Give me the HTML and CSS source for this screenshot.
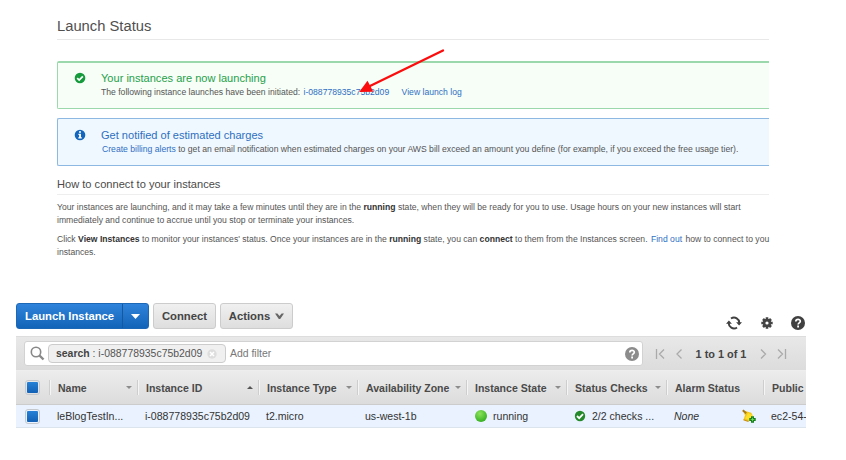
FILE: index.html
```html
<!DOCTYPE html>
<html lang="en">
<head>
<meta charset="utf-8">
<title>Launch Status</title>
<link rel="stylesheet" href="styles.css">
</head>
<body>
<main class="status">
  <h1>Launch Status</h1>
  <section class="notice success">
    <svg class="nicon" viewBox="0 0 12 12"><circle cx="6" cy="6" r="5.300" fill="#159a3c"/><path d="M3.200 6.100l2 2 3.600-3.800" fill="none" stroke="#fff" stroke-width="1.700"/></svg>
    <div>
      <h2>Your instances are now launching</h2>
      <p class="small launch">The following instance launches have been initiated: <a class="id">i-088778935c75b2d09</a> <a class="log">View launch log</a></p>
    </div>
  </section>
  <section class="notice info">
    <svg class="nicon" viewBox="0 0 12 12"><circle cx="6" cy="6" r="5.300" fill="#1266bd"/><path d="M5 2.200h2v1.600H5zM4.400 4.800H7v3.500h.8v1.200H4.300V8.300h.8V6h-.7z" fill="#fff"/></svg>
    <div>
      <h2>Get notified of estimated charges</h2>
      <p class="small bill"><a>Create billing alerts</a> to get an email notification when estimated charges on your AWS bill exceed an amount you define (for example, if you exceed the free usage tier).</p>
    </div>
  </section>
  <h3>How to connect to your instances</h3>
  <p class="small para">Your instances are launching, and it may take a few minutes until they are in the <b>running</b> state, when they will be ready for you to use. Usage hours on your new instances will start<br>immediately and continue to accrue until you stop or terminate your instances.</p>
  <p class="small para">Click <b>View Instances</b> to monitor your instances' status. Once your instances are in the <b>running</b> state, you can <b>connect</b> to them from the Instances screen. <a class="find">Find out</a> how to connect to you<br>instances.</p>
  <svg class="arrow" viewBox="0 0 90 50"><path d="M85 3.500L11 39.500" stroke="#fb0d0d" stroke-width="2.300" stroke-linecap="round"/><path d="M1.200 44.900L9.500 33.800 15.300 44.700z" fill="#fb0d0d"/></svg>
</main>
<section class="console">
  <div class="toolbar">
    <div class="btn primary"><span class="launchlabel">Launch Instance</span><span class="split"><svg width="9" height="5" viewBox="0 0 9 5"><path d="M0 0h9L4.500 5z" fill="#fff"/></svg></span></div>
    <div class="btn connect">Connect</div>
    <div class="btn actions">Actions<svg width="9" height="7" viewBox="0 0 9 7"><path d="M0 .5h2.400L4.500 3 6.600.5H9L5.200 6H3.800z" fill="#666"/></svg></div>
    <div class="tools">
      <svg class="refresh" viewBox="0 0 16 14"><path d="M5 2.600A5.200 5.200 0 0 1 13.200 7.500M11 11.400A5.200 5.200 0 0 1 2.800 6.500" fill="none" stroke="#404040" stroke-width="1.900"/><path d="M0 7.800L2.900 4.500 5.900 7.800zM10.100 6.200h5.900L13.100 9.500z" fill="#404040"/></svg>
      <svg class="gear" viewBox="-6 -6 12 12"><g stroke="#444" stroke-width="2.600"><path d="M0-5.700V5.700M-5.700 0H5.700M-4-4L4 4M4-4L-4 4"/></g><circle r="4.200" fill="#444"/><circle r="1.600" fill="#fff"/></svg>
      <svg class="help" viewBox="0 0 14 14"><circle cx="7" cy="7" r="7" fill="#404040"/><path d="M4.800 5.400C4.800 2.600 9.400 2.700 9.300 5.300 9.200 6.900 7.100 6.900 7.100 8.600" fill="none" stroke="#fff" stroke-width="1.700"/><path d="M6.200 9.600h1.800v1.800H6.200z" fill="#fff"/></svg>
    </div>
  </div>
  <div class="filterbar">
    <div class="search">
      <svg class="mag" viewBox="0 0 15 15"><circle cx="6" cy="6" r="4.700" fill="none" stroke="#888" stroke-width="1.600"/><path d="M9.500 9.500l4 4" stroke="#888" stroke-width="2.400"/></svg>
      <div class="chip"><span><b>search</b> : i-088778935c75b2d09</span><svg width="10" height="10" viewBox="0 0 10 10"><circle cx="5" cy="5" r="4.700" fill="#ddd"/><path d="M3 3l4 4M7 3L3 7" stroke="#fff" stroke-width="1.500"/></svg></div>
      <span class="add">Add filter</span>
      <svg class="shelp" viewBox="0 0 14 14"><circle cx="7" cy="7" r="7" fill="#8c8c8c"/><path d="M4.800 5.400C4.800 2.600 9.400 2.700 9.300 5.300 9.200 6.900 7.100 6.900 7.100 8.600" fill="none" stroke="#fff" stroke-width="1.700"/><path d="M6.200 9.600h1.800v1.800H6.200z" fill="#fff"/></svg>
    </div>
    <div class="pager">
      <svg width="28" height="12" viewBox="0 0 28 12" fill="none" stroke="#aaa" stroke-width="1.300"><path d="M1.500 1v10M9 1.500L4.500 6 9 10.500M26.500 1.500L22 6l4.500 4.500"/></svg>
      <b>1 to 1 of 1</b>
      <svg width="28" height="12" viewBox="0 0 28 12" fill="none" stroke="#aaa" stroke-width="1.300"><path d="M2 1.500L6.500 6 2 10.500M19 1.500L23.500 6 19 10.500M26.500 1v10"/></svg>
    </div>
  </div>
  <div class="row head">
    <div class="cell sel"><i class="check"></i></div>
    <div class="cell">Name<i class="sort"></i></div>
    <div class="cell">Instance ID<i class="sort up"></i></div>
    <div class="cell">Instance Type<i class="sort"></i></div>
    <div class="cell">Availability Zone<i class="sort"></i></div>
    <div class="cell">Instance State<i class="sort"></i></div>
    <div class="cell">Status Checks<i class="sort"></i></div>
    <div class="cell">Alarm Status</div>
    <div class="cell">Public</div>
  </div>
  <div class="row data">
    <div class="cell sel"><i class="check"></i></div>
    <div class="cell">leBlogTestIn...</div>
    <div class="cell">i-088778935c75b2d09</div>
    <div class="cell">t2.micro</div>
    <div class="cell">us-west-1b</div>
    <div class="cell"><i class="dot"></i>running</div>
    <div class="cell"><svg class="ok" viewBox="0 0 12 12"><circle cx="6" cy="6" r="5.200" fill="#24892a"/><path d="M3 6l2.200 2.200L9 4.200" fill="none" stroke="#fff" stroke-width="1.800"/></svg>2/2 checks ...</div>
    <div class="cell"><em>None</em><svg class="bell" viewBox="0 0 14 14"><path d="M.8 1.200L4 2.300 9.200 3.800 10.500 6 6.500 12.500 1.500 10.800 3 6.200z" fill="#f3c719"/><path d="M.8 1.200l3.400 3" stroke="#a97818" stroke-width="2"/><path d="M1.500 10.800l5 1.700" stroke="#c98f14" stroke-width="1.200"/><path d="M6 4l5 2.200-3 5-5-1.600z" fill="#ffdf28"/><path d="M10.500 7.300v6.400M7.300 10.500h6.400" stroke="#16811c" stroke-width="3"/><path d="M10.500 8.700v3.600M8.700 10.500h3.600" stroke="#7ae364" stroke-width=".8"/></svg></div>
    <div class="cell">ec2-54-</div>
  </div>
</section>
</body>
</html>
```
FILE: styles.css
```css
* { box-sizing: border-box; }
body { margin: 0; width: 846px; height: 460px; overflow: hidden; background: #fff; font-family: "Liberation Sans", Arial, sans-serif; color: #4a4a4a; }
h1, h2, h3, p { margin: 0; font-weight: normal; white-space: nowrap; }
a { color: #2f6fc4; }
svg { display: block; flex: none; }
.status { position: relative; width: 712px; height: 303px; margin-left: 57px; padding-top: 12px; }
h1 { height: 28px; line-height: 28px; font-size: 14.750px; border-bottom: 1px solid #e8e8e8; color: #505050; }
.notice { display: flex; height: 48px; padding: 10px 0 0 16px; border: 1px solid; border-right: 0; border-radius: 2px 0 0 2px; }
.nicon { width: 12px; height: 12px; margin-right: 15px; }
.success { margin-top: 21px; padding-top: 9px; border-top-width: 2px; border-color: #9bd8ab; background: #f7fef7; }
.info { margin-top: 9px; border-color: #8db8e2; background: #eff8ff; }
h2 { height: 13px; line-height: 13px; font-size: 11.050px; color: #25a04b; }
.info h2 { color: #2e6fc0; }
.small { font-size: 8.620px; line-height: 13px; color: #555; }
.small b { color: #333; }
.notice .small { margin-top: 1px; }
.id { margin-left: 1px; }
.log { margin-left: 10px; }
.find { margin: 0 1px; }
.bill { padding-left: 1px; font-size: 8.640px; }
h3 { height: 21px; margin-top: 8px; line-height: 20px; font-size: 11.100px; border-bottom: 1px solid #eee; }
.para { margin-top: 6px; }
.arrow { position: absolute; left: 301px; top: 47px; width: 90px; height: 50px; }
.console { width: 790px; margin-left: 16px; font-size: 10.550px; overflow: hidden; color: #333; }
.toolbar { display: flex; height: 33px; }
.btn { display: flex; align-items: center; justify-content: center; height: 26px; border: 1px solid #ccc; border-radius: 3px; background: linear-gradient(#f0f0f0, #dedede); color: #444; font-size: 11.300px; font-weight: bold; white-space: nowrap; }
.primary { width: 133px; border-color: #1c68b7; background: linear-gradient(#2f83da, #1264b8); color: #fff; }
.launchlabel { width: 106px; text-align: center; }
.split { display: flex; width: 26px; height: 24px; align-items: center; justify-content: center; border-left: 1px solid #1458a0; }
.connect { width: 63px; margin-left: 4px; }
.actions { width: 73px; margin-left: 4px; gap: 5px; }
.tools { display: flex; align-items: center; margin: 7px 1px 0 auto; }
.refresh { width: 16px; height: 14px; }
.gear { width: 12px; height: 12px; margin-left: 19px; }
.help { width: 14px; height: 14px; margin-left: 18px; }
.filterbar { display: flex; align-items: center; height: 34px; border-top: 1px solid #ddd; background: linear-gradient(#e8e8e8, #dcdcdc); }
.search { display: flex; align-items: center; width: 619px; height: 25px; margin-left: 8px; padding: 0 3px 0 5px; border: 1px solid #d2d2d2; border-radius: 3px; background: #fff; }
.mag { width: 15px; height: 15px; }
.chip { display: flex; align-items: center; justify-content: space-between; width: 178px; height: 19px; margin-left: 3px; padding: 0 8px 0 7px; border: 1px solid #ccc; border-radius: 4px; background: #f0f0f0; color: #555; font-size: 10.450px; white-space: nowrap; }
.chip b { color: #444; }
.add { margin-left: 4px; color: #777; font-size: 10.450px; }
.shelp { width: 14px; height: 14px; margin-left: auto; }
.pager { display: flex; align-items: center; justify-content: space-between; width: 132px; margin-left: 12px; color: #444; font-size: 10.900px; }
.row { display: grid; grid-template-columns: 33px 88px 121px 99px 109px 100px 100px 97px 43px; }
.cell { display: flex; align-items: center; height: 15px; padding-left: 8px; white-space: nowrap; }
.cell.sel { padding-left: 9px; }
.head { height: 35px; align-items: center; border-top: 1px solid #eee; border-bottom: 1px solid #ccc; background: linear-gradient(#ececec, #dcdcdc); color: #4a4a4a; font-weight: bold; }
.head .cell:not(.sel) { border-left: 1px solid #cecece; box-shadow: inset 1px 0 #f5f5f5; }
.data { height: 23px; align-items: center; border-bottom: 1px solid #dbe3ed; background: #e9f2fe; color: #333; }
.sort { margin: 0 5px 0 auto; border: 3px solid transparent; border-top-color: #8c8c8c; border-bottom: 0; }
.sort.up { border-top: 0; border-bottom: 3px solid #555; }
.check { width: 15px; height: 15px; border: 1px solid #c5c9cd; border-radius: 3px; background: linear-gradient(#2681d6, #1261b6) content-box #f5f5f5; padding: 1px; }
.dot { width: 12px; height: 12px; margin: 0 6px 0 1px; border-radius: 50%; background: radial-gradient(circle at 40% 30%, #8be35b, #3db526 70%, #2c9a20); }
.ok { width: 12px; height: 12px; margin-right: 6px; }
.bell { width: 14px; height: 14px; margin: 0 7px 0 auto; }
```
